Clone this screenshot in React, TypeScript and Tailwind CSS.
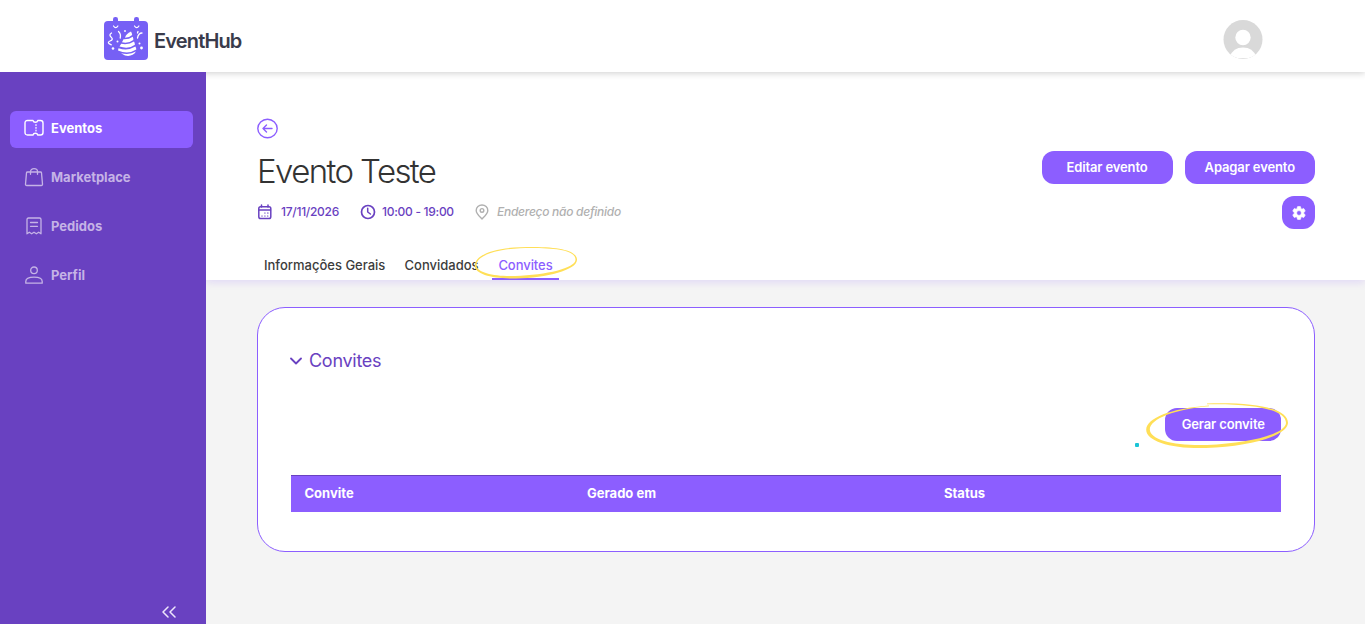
import React from "react";

const stroke = {
  fill: "none",
  stroke: "currentColor",
  strokeLinecap: "round" as const,
  strokeLinejoin: "round" as const,
};

function Logo() {
  return (
    <svg width="46" height="45" viewBox="0 0 46 45" className="mt-[-2px] shrink-0">
      <rect x="1" y="5" width="44" height="39" rx="4" fill="#7660f5" />
      <rect x="10" y="1" width="5" height="9" rx="2.2" fill="#7660f5" />
      <rect x="31" y="1" width="5" height="9" rx="2.2" fill="#7660f5" />
      <g fill="none" stroke="#fff" strokeLinecap="round">
        <path d="M10.500 10q2.200 3.200 4.400 0M31.500 10q2.200 3.200 4.400 0" strokeWidth="1.200" />
        <path d="M8.500 17q-3 2-.3 4.200t-1.200 3.800t1.300 3.800M15.500 15.500q2.700 2.500 1.700 6.500M39 17q-3.500 0-4.500 5M35 15.500l-.5 1.500" strokeWidth="1.300" />
      </g>
      <g fill="#fff">
        <path d="M28 15.500q-5 2.300-6 6.200q4.500 0 7.200-2.700q-.2-2-1.200-3.500Z" />
        <path d="M20.500 23.300q5.500.3 9.200-2.600q.8 1.600.6 3.300q-4.500 3.600-11.300 2.300Z" />
        <path d="M18.200 27.800q7.500 1.300 12.800-2.300q.9 1.600.9 3.200q-6 4.800-15.400 1.800Z" />
        <path d="M15.500 32.200q9.500 3 16.900-1.600q.9 1.500.9 3q-8.200 5.400-18.300 1Z" />
        <path d="M18 37.300q8.500 2.200 15-1.700q-3.500 5.500-11 4Z" />
        <circle cx="22" cy="15" r=".9" />
        <circle cx="14.500" cy="25.500" r="1" />
        <circle cx="10" cy="32.500" r="1.300" />
        <circle cx="36.500" cy="27.500" r="1" />
        <circle cx="38.500" cy="32" r="1.400" />
      </g>
    </svg>
  );
}

function TicketIcon() {
  return (
    <svg width="20" height="18" viewBox="0 0 20 18" {...stroke} strokeWidth="1.400">
      <path d="M3.500 1.500H9q.5 1.700 2.400 1.700T13.800 1.500H16.500q2.500 0 2.500 2.500v9.500q0 2.500-2.500 2.500H13.800q-.5-1.700-2.400-1.700T9 16H3.500Q1 16 1 13.500V4q0-2.500 2.500-2.500Z" />
      <path d="M12 5.500v1M12 8.300v1M12 11v1" strokeWidth="1.200" />
    </svg>
  );
}

function BagIcon() {
  return (
    <svg width="20" height="20" viewBox="0 0 20 20" {...stroke} strokeWidth="1.300">
      <path d="M3.500 5h13q.9 0 1 .9l1 11.200q.1 1.400-1.300 1.400H2.800q-1.400 0-1.300-1.400l1-11.200q.1-.9 1-.9Z" />
      <path d="M6.500 7.300V4.600a3.500 3 0 0 1 7 0v2.700" />
    </svg>
  );
}

function ReceiptIcon() {
  return (
    <svg width="20" height="20" viewBox="0 0 20 20" {...stroke} strokeWidth="1.300">
      <path d="M3 17.800V3.500Q3 2 4.500 2h11Q17 2 17 3.500v14.300l-2.300-1.600-2.350 1.600L10 16.200l-2.350 1.600-2.350-1.600Z" />
      <path d="M6.500 6.500h7M6.500 10.300h7" />
    </svg>
  );
}

function PersonIcon() {
  return (
    <svg width="20" height="20" viewBox="0 0 20 20" {...stroke} strokeWidth="1.300">
      <circle cx="10" cy="5.300" r="3.300" />
      <path d="M1.800 18.200v-1.700q0-4.300 8.200-4.300t8.200 4.300v1.700Z" />
    </svg>
  );
}

function NavItem({ icon, label, active }: { icon: React.ReactNode; label: string; active?: boolean }) {
  return (
    <a
      className={
        active
          ? "flex h-[37px] items-center rounded-md bg-[#8c5eff] pb-[2px] pl-[14px] text-white"
          : "flex h-[37px] items-center rounded-md pb-[2px] pl-[14px] text-[#c5b3e6]"
      }
    >
      <span className="flex w-[27px] shrink-0">{icon}</span>
      <span className="pt-[2px] text-[13px] font-bold">{label}</span>
    </a>
  );
}

function CalendarIcon() {
  return (
    <svg width="16" height="16" viewBox="0 0 16 16" {...stroke} strokeWidth="1.500">
      <rect x="1.800" y="2.800" width="12" height="11.700" rx="1.800" />
      <path d="M4.500 1v2M11 1v2" />
      <path d="M2 6h11.500" strokeWidth="1.300" />
      <path d="M10.500 9h.6M7.700 9h.4M4.800 12h.4M7.700 12h.4M10.500 12h.4" strokeWidth="1.200" />
    </svg>
  );
}

function ClockIcon() {
  return (
    <svg width="16" height="16" viewBox="0 0 16 16" {...stroke} strokeWidth="1.700">
      <circle cx="8" cy="8" r="6.500" />
      <path d="M7.700 4.200V8l2.700 2" strokeWidth="1.500" />
    </svg>
  );
}

function PinIcon() {
  return (
    <svg width="14" height="16" viewBox="0 0 14 16" {...stroke} strokeWidth="1.400">
      <path d="M7 15C4.500 12.500 1.200 9.700 1.200 6.500a5.800 5.500 0 0 1 11.600 0C12.800 9.700 9.500 12.500 7 15Z" />
      <circle cx="7" cy="6.400" r="1.800" />
    </svg>
  );
}

function GearIcon() {
  return (
    <svg width="16" height="16" viewBox="0 0 24 24" fill="#fff" stroke="#fff" strokeWidth="1">
      <path d="M19.140 12.940c.04-.3.060-.61.060-.94 0-.32-.02-.64-.07-.94l2.030-1.580a.49.490 0 0 0 .12-.61l-1.920-3.320a.488.488 0 0 0-.59-.22l-2.390.96c-.5-.38-1.030-.7-1.620-.94l-.36-2.540a.484.484 0 0 0-.48-.41h-3.840c-.24 0-.43.17-.47.41l-.36 2.540c-.59.24-1.130.57-1.620.94l-2.390-.96a.49.490 0 0 0-.59.220L2.740 8.870c-.12.21-.08.47.12.61l2.030 1.580c-.05.3-.09.63-.09.94s.02.64.07.94l-2.030 1.580a.49.490 0 0 0-.12.61l1.920 3.320c.12.22.37.29.59.22l2.390-.96c.5.38 1.030.7 1.620.94l.36 2.540c.05.24.24.41.48.41h3.840c.24 0 .44-.17.47-.41l.36-2.540c.59-.24 1.130-.56 1.620-.94l2.390.96c.22.08.47 0 .59-.22l1.920-3.320a.49.490 0 0 0-.12-.61zM12 15.600A3.600 3.600 0 1 1 12 8.400a3.600 3.600 0 0 1 0 7.200" />
    </svg>
  );
}

function Button({ children, width }: { children: React.ReactNode; width: string }) {
  return (
    <button
      className={`flex h-[33px] items-center justify-center rounded-[12px] bg-[#8c5eff] text-[13px] font-semibold tracking-[-0.13px] text-white ${width}`}
    >
      {children}
    </button>
  );
}

function Header() {
  return (
    <header className="relative z-10 flex h-[72px] shrink-0 items-center justify-between bg-white pr-[102.500px] pl-[103px] shadow-[0_1px_7px_rgba(0,0,0,0.2)]">
      <div className="flex items-center gap-[5px] pt-[6px]">
        <Logo />
        <span className="mt-[3px] text-[20px] font-semibold tracking-[-0.850px] text-[#393b4b]">EventHub</span>
      </div>
      <svg width="40" height="40" viewBox="0 0 40 40" className="mt-[7px]">
        <defs>
          <clipPath id="avatar">
            <circle cx="20" cy="19.500" r="19.500" />
          </clipPath>
        </defs>
        <circle cx="20" cy="19.500" r="19.500" fill="#d9d9d9" />
        <g clipPath="url(#avatar)" fill="#fff">
          <circle cx="20" cy="17.500" r="7.700" />
          <path d="M7 36.500Q10 27.500 20 27.500T33 36.500Q28 38.300 20 38.300T7 36.500Z" />
        </g>
      </svg>
    </header>
  );
}

function Sidebar() {
  return (
    <aside className="relative z-20 flex w-[206px] shrink-0 flex-col bg-[#6941c1] pt-[38.500px] pr-[13px] pl-[10px]">
      <nav className="flex flex-col gap-3">
        <NavItem icon={<TicketIcon />} label="Eventos" active />
        <NavItem icon={<BagIcon />} label="Marketplace" />
        <NavItem icon={<ReceiptIcon />} label="Pedidos" />
        <NavItem icon={<PersonIcon />} label="Perfil" />
      </nav>
      <svg width="16" height="12" viewBox="0 0 16 12" className="mt-auto mr-4 mb-[6px] self-end text-[#eee6fb]" {...stroke} strokeWidth="1.500">
        <path d="M7 1 2 6l5 5M14 1 9 6l5 5" />
      </svg>
    </aside>
  );
}

function EventHeader() {
  return (
    <section className="flex h-[208px] shrink-0 flex-col bg-white pr-[50px] pl-[51px] shadow-[0_2px_8px_rgba(140,94,255,0.2)]">
      <svg width="22" height="21" viewBox="0 0 22 21" className="mt-[46px] text-[#8c5eff]" {...stroke} strokeWidth="1.400">
        <ellipse cx="10.500" cy="10.500" rx="9.700" ry="9.200" />
        <path d="M15 10.500H6M9.500 7 6 10.500 9.500 14" />
      </svg>
      <div className="mt-[12px] flex justify-between">
        <div>
          <h1 className="h-[40px] text-[33px] leading-[41px] font-light tracking-[-1.600px] whitespace-nowrap text-[#333]">Evento Teste</h1>
          <div className="mt-[13px] flex h-4 items-center text-[12px] font-medium tracking-[-0.280px] text-[#6941c1]">
            <CalendarIcon />
            <span className="ml-[8px] w-[79px] whitespace-nowrap">17/11/2026</span>
            <ClockIcon />
            <span className="ml-[6px] w-[93px] whitespace-nowrap">10:00 - 19:00</span>
            <span className="flex items-center text-[#b0b0b0]">
              <PinIcon />
              <span className="ml-[8px] whitespace-nowrap italic [font-feature-settings:'cv11']">Endereço não definido</span>
            </span>
          </div>
        </div>
        <div className="flex flex-col items-end gap-3">
          <div className="flex gap-3">
            <Button width="w-[131px]">Editar evento</Button>
            <Button width="w-[130.500px]">Apagar evento</Button>
          </div>
          <Button width="w-[33px]">
            <GearIcon />
          </Button>
        </div>
      </div>
      <nav className="mt-auto flex h-[29px] text-[13px] leading-[29px] font-medium whitespace-nowrap text-[#3c3c3c]">
        <a className="ml-[7px] w-[140.500px]">Informações Gerais</a>
        <a className="w-[87.500px]">Convidados</a>
        <a className="relative w-[67px] border-b-2 border-[#8c5eff] text-center tracking-[-0.060px] text-[#8c5eff]">
          Convites
          <svg width="106" height="34" viewBox="0 0 106 34" className="absolute top-[-5px] left-[-18px]">
            <path
              fill="#ffdf57"
              d="M46 2.200C18 3.500 2 11 2.500 19.500C3 27 21 30.600 41 30C73 29 101 22 101.500 14C102 4 81 1.500 46 2.200L46 1.300C84-.2 103.500 4.500 103 14C102.500 24 73 32 42 32.500C19 32.800.8 28.500.8 19.500C.8 9 20 2 46 1.300Z"
            />
          </svg>
        </a>
      </nav>
    </section>
  );
}

function InvitesCard() {
  return (
    <section className="mt-[26.500px] mr-[50px] ml-[51px] h-[245.500px] rounded-[28px] border border-[#8c5eff] bg-white px-[33px]">
      <h2 className="mt-[38.500px] ml-[-1px] flex h-7 items-center gap-[7px] text-[18px] tracking-[-0.280px] text-[#6941c1]">
        <svg width="12" height="8" viewBox="0 0 12 8" className="mt-[2px]" {...stroke} strokeWidth="1.800">
          <path d="M1 1.500 6 6.500 11 1.500" />
        </svg>
        Convites
      </h2>
      <div className="mt-[33.500px] flex justify-end">
        <div className="relative">
          <Button width="w-[116.500px]">
            <span className="pt-px pl-px">Gerar convite</span>
          </Button>
          <svg width="144" height="46" viewBox="0 0 144 46" className="absolute top-[-5px] left-[-20px]">
            <path
              fill="#ffdf57"
              d="M64 2.500C25 5.500 2 15 1.200 26.500C1 38 26 46 61 45C105 43.500 142 33 143 20C143 7 117-1 62 .500V1.300C114 .2 141 8 141 20C140 31 105 40.500 62 42C30 43 5 37 4.800 26.500C5 15.500 31 6 64 3.200Z"
            />
          </svg>
          <span className="absolute top-[35px] left-[-30px] size-1 rounded-[1px] bg-[#1bc4d6]" />
        </div>
      </div>
      <div className="mt-[34.500px] flex h-[36.500px] items-center border-t border-[#6941c1] bg-[#8c5eff] pl-[13.500px] text-[13px] font-bold text-white">
        <span className="w-[282.500px]">Convite</span>
        <span className="w-[357px]">Gerado em</span>
        <span>Status</span>
      </div>
    </section>
  );
}

export default function App() {
  return (
    <div className="flex h-[624px] w-[1365px] flex-col overflow-hidden bg-[#f4f4f4] font-['Inter','Liberation_Sans',sans-serif]">
      <Header />
      <div className="flex min-h-0 flex-1">
        <Sidebar />
        <main className="flex min-w-0 flex-1 flex-col">
          <EventHeader />
          <InvitesCard />
        </main>
      </div>
    </div>
  );
}
